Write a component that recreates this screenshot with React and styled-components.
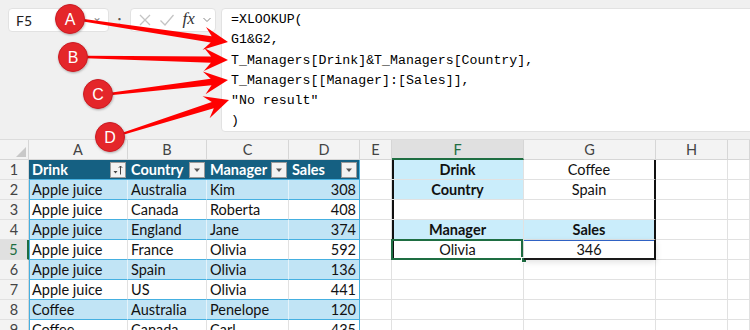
import React from 'react'
import styled, { createGlobalStyle } from 'styled-components'

const GlobalStyle = createGlobalStyle`
  html, body {
    margin: 0;
    padding: 0;
    background: #f0f0f0;
  }
  * { box-sizing: border-box; }
`

const cellFont = `"Lato", "Noto Sans", sans-serif`

const tableRows = [
    ['Apple juice', 'Australia', 'Kim', 308],
    ['Apple juice', 'Canada', 'Roberta', 408],
    ['Apple juice', 'England', 'Jane', 374],
    ['Apple juice', 'France', 'Olivia', 592],
    ['Apple juice', 'Spain', 'Olivia', 136],
    ['Apple juice', 'US', 'Olivia', 441],
    ['Coffee', 'Australia', 'Penelope', 120],
    ['Coffee', 'Canada', 'Carl', 435],
]

const lookup = {
    1: [{ text: 'Drink', head: true }, { text: 'Coffee' }],
    2: [{ text: 'Country', head: true }, { text: 'Spain' }],
    3: [{ text: '' }, { text: '' }],
    4: [{ text: 'Manager', head: true }, { text: 'Sales', head: true }],
    5: [{ text: 'Olivia' }, { text: '346' }],
}

const formula = [
    '=XLOOKUP(',
    'G1&G2,',
    'T_Managers[Drink]&T_Managers[Country],',
    'T_Managers[[Manager]:[Sales]],',
    '"No result"',
    ')',
]

const callouts = [
    { id: 'A', cx: 70, cy: 19, sx: 82, sy: 20, tx: 228, ty: 42 },
    { id: 'B', cx: 73, cy: 57, sx: 86, sy: 57, tx: 228, ty: 60 },
    { id: 'C', cx: 98, cy: 94, sx: 110, sy: 94, tx: 228, ty: 80 },
    { id: 'D', cx: 110, cy: 137, sx: 122, sy: 134, tx: 229, ty: 100 },
]

// tapered arrow: thin at the callout, wide notched head at the formula line
function arrowPoints({ sx, sy, tx, ty }) {
    const dx = tx - sx
    const dy = ty - sy
    const len = Math.hypot(dx, dy)
    const ux = dx / len
    const uy = dy / len
    const px = -uy
    const py = ux
    const p = (a, b) => `${(tx - a * ux + b * px).toFixed(1)},${(ty - a * uy + b * py).toFixed(1)}`
    return [
        p(0, 0),
        p(24, 11.5),
        p(17, 3.2),
        p(len, 1.2),
        p(len, -1.2),
        p(17, -3.2),
        p(24, -11.5),
    ].join(' ')
}

function Callouts() {
    return (
        <Overlay width="750" height="330" viewBox="0 0 750 330">
            <defs>
                <filter id="dot-shadow" x="-50%" y="-50%" width="200%" height="200%">
                    <feDropShadow dx="0.5" dy="1" stdDeviation="1.2" floodColor="#000" floodOpacity="0.3" />
                </filter>
            </defs>
            {callouts.map((c) => (
                <polygon key={c.id + 'a'} points={arrowPoints(c)} fill="#ff0000" />
            ))}
            {callouts.map((c) => (
                <g key={c.id}>
                    <circle cx={c.cx} cy={c.cy} r="14.5" fill="#e4252c" stroke="#c91c22" strokeWidth="1" filter="url(#dot-shadow)" />
                    <text x={c.cx} y={c.cy + 5.5} textAnchor="middle" fill="#fff" fontSize="16" fontFamily='"Liberation Sans", Arial, sans-serif'>{c.id}</text>
                </g>
            ))}
        </Overlay>
    )
}

function SortIcon() {
    return (
        <svg width="12" height="12" viewBox="0 0 12 12">
            <path d="M1.5 7 L5.5 7 L3.5 9.5 Z" fill="#444" />
            <path d="M8.5 2 L8.5 10.5 M6.8 3.8 L8.5 2 L10.2 3.8" stroke="#444" strokeWidth="1" fill="none" />
        </svg>
    )
}

function DropIcon() {
    return (
        <svg width="10" height="10" viewBox="0 0 10 10">
            <path d="M2 3.5 L8 3.5 L5 7 Z" fill="#555" />
        </svg>
    )
}

function FilterButton({ sort }) {
    return <Filter>{sort ? <SortIcon /> : <DropIcon />}</Filter>
}

function App() {
    const letters = ['A', 'B', 'C', 'D', 'E', 'F', 'G', 'H', '']

    const renderRow = (r) => {
        const cells = []
        cells.push(<RowNum key={'n' + r} $active={r === 5}>{r}</RowNum>)

        // table A:D
        if (r === 1) {
            ;['Drink', 'Country', 'Manager', 'Sales'].forEach((h, i) => {
                cells.push(
                    <TableHead key={'h' + i} $first={i === 0} $last={i === 3}>
                        <span>{h}</span>
                        <FilterButton sort={i === 0} />
                    </TableHead>
                )
            })
        } else {
            const row = tableRows[r - 2]
            row.forEach((v, i) => {
                cells.push(
                    <TableCell key={'t' + i} $band={r % 2 === 0} $first={i === 0} $last={i === 3} $num={i === 3}>
                        {v}
                    </TableCell>
                )
            })
        }

        cells.push(<Cell key="e" />)

        // lookup F:G
        if (lookup[r]) {
            const [f, g] = lookup[r]
            cells.push(
                <LookupCell key="f" $head={f.head} $left={true} $selected={r === 5}>
                    {f.text}
                    {r === 5 && <FillHandle />}
                </LookupCell>
            )
            cells.push(
                <LookupCell key="g" $head={g.head} $right={true} $spill={r === 5}>
                    {g.text}
                </LookupCell>
            )
        } else {
            cells.push(<Cell key="f" />)
            cells.push(<Cell key="g" />)
        }

        cells.push(<Cell key="h" />)
        cells.push(<Cell key="i" />)
        return cells
    }

    return (
        <>
            <GlobalStyle />
            <Page>
                <FormulaBar>
                    <NameBox>
                        <span>F5</span>
                        <Chevron>⌄</Chevron>
                    </NameBox>
                    <Grip>:</Grip>
                    <FxBox>
                        <svg width="14" height="14" viewBox="0 0 14 14">
                            <path d="M2 2 L12 12 M12 2 L2 12" stroke="#c4c4c4" strokeWidth="1.3" />
                        </svg>
                        <svg width="16" height="14" viewBox="0 0 16 14">
                            <path d="M1.5 7.5 L6 12 L14.5 2" stroke="#c4c4c4" strokeWidth="1.3" fill="none" />
                        </svg>
                        <Fx>fx</Fx>
                        <svg width="10" height="10" viewBox="0 0 10 10">
                            <path d="M1.5 3 L5 6.5 L8.5 3" stroke="#888" strokeWidth="1" fill="none" />
                        </svg>
                    </FxBox>
                    <FormulaBox>
                        {formula.map((line, i) => (
                            <FormulaLine key={i}>{line}</FormulaLine>
                        ))}
                    </FormulaBox>
                </FormulaBar>

                <Sheet>
                    <Corner>
                        <svg width="10" height="10" viewBox="0 0 10 10">
                            <path d="M10 0 L10 10 L0 10 Z" fill="#c8c8c8" />
                        </svg>
                    </Corner>
                    {letters.map((l, i) => (
                        <ColHead key={i} $active={l === 'F'}>{l}</ColHead>
                    ))}
                    {[1, 2, 3, 4, 5, 6, 7, 8, 9].map((r) => renderRow(r))}
                </Sheet>

                <Callouts />
            </Page>
        </>
    )
}

export default App

const Page = styled.div`
    position: relative;
    width: 750px;
    height: 330px;
    overflow: hidden;
    background: #f0f0f0;
    font-family: ${cellFont};
`

const Overlay = styled.svg`
    position: absolute;
    left: 0;
    top: 0;
    pointer-events: none;
`

const FormulaBar = styled.div`
    height: 139px;
    display: flex;
    align-items: flex-start;
    padding: 8px 0 0 8px;
`

const NameBox = styled.div`
    width: 101px;
    height: 24px;
    background: #fff;
    border: 1px solid #e2e2e2;
    border-radius: 4px;
    display: flex;
    align-items: center;
    justify-content: space-between;
    padding: 0 6px 0 7px;
    font-size: 14px;
    color: #222;
`

const Chevron = styled.span`
    color: #888;
    font-size: 12px;
    line-height: 1;
    margin-top: -6px;
`

const Grip = styled.div`
    width: 21px;
    height: 24px;
    display: flex;
    align-items: center;
    justify-content: center;
    font-weight: bold;
    font-size: 15px;
    color: #555;
`

const FxBox = styled.div`
    width: 86px;
    height: 24px;
    background: #fff;
    border: 1px solid #e2e2e2;
    border-radius: 4px;
    display: flex;
    align-items: center;
    justify-content: space-between;
    padding: 0 3px 0 7px;
`

const Fx = styled.span`
    font-family: "Liberation Serif", "DejaVu Serif", serif;
    font-style: italic;
    font-size: 17px;
    color: #333;
    margin-top: -3px;
`

const FormulaBox = styled.div`
    flex: 1;
    margin-left: 5px;
    margin-right: -12px;
    height: 124px;
    background: #fff;
    border: 1px solid #e2e2e2;
    border-radius: 4px;
    padding: 1px 0 0 9px;
`

const FormulaLine = styled.div`
    height: 20.3px;
    line-height: 20.3px;
    font-family: "Liberation Mono", "DejaVu Sans Mono", monospace;
    font-size: 13.25px;
    color: #000;
    white-space: pre;
`

const Sheet = styled.div`
    display: grid;
    grid-template-columns: 29px 99px 79px 82px 71px 32px 132px 132px 72px 1fr;
    grid-auto-rows: 20px;
    background: #fff;
    border-top: 1px solid #dcdcdc;
`

const Corner = styled.div`
    background: #f3f3f3;
    border-right: 1px solid #d6d6d6;
    border-bottom: 1px solid #d6d6d6;
    display: flex;
    align-items: flex-end;
    justify-content: flex-end;
    padding: 0 2px 2px 0;
`

const ColHead = styled.div`
    background: ${(p) => (p.$active ? '#e0e0e0' : '#f3f3f3')};
    color: ${(p) => (p.$active ? '#1e6e42' : '#444')};
    border-right: 1px solid #d6d6d6;
    border-bottom: ${(p) => (p.$active ? '2px solid #1e6e42' : '1px solid #d6d6d6')};
    display: flex;
    align-items: center;
    justify-content: center;
    font-size: 14.5px;
`

const RowNum = styled.div`
    background: ${(p) => (p.$active ? '#e0e0e0' : '#f3f3f3')};
    color: ${(p) => (p.$active ? '#1e6e42' : '#444')};
    border-right: ${(p) => (p.$active ? '2px solid #1e6e42' : '1px solid #d6d6d6')};
    border-bottom: 1px solid #e1e1e1;
    display: flex;
    align-items: center;
    justify-content: center;
    font-size: 14.5px;
`

const Cell = styled.div`
    background: #fff;
    border-right: 1px solid #e1e1e1;
    border-bottom: 1px solid #e1e1e1;
`

const TableHead = styled.div`
    background: #156082;
    color: #fff;
    font-weight: bold;
    font-size: 14.5px;
    display: flex;
    align-items: center;
    justify-content: space-between;
    padding: 0 2px 0 3px;
    border-bottom: 1px solid #45b0e1;
    border-right: ${(p) => (p.$last ? '1px solid #45b0e1' : 'none')};
    overflow: hidden;
    white-space: nowrap;
`

const Filter = styled.div`
    flex: none;
    width: 16px;
    height: 16px;
    background: #f2f2f2;
    border: 1px solid #9a9a9a;
    display: flex;
    align-items: center;
    justify-content: center;
`

const TableCell = styled.div`
    background: ${(p) => (p.$band ? '#c1e4f5' : '#fff')};
    color: #111;
    font-size: 14.5px;
    display: flex;
    align-items: center;
    justify-content: ${(p) => (p.$num ? 'flex-end' : 'flex-start')};
    padding: 0 3px;
    border-bottom: 1px solid #45b0e1;
    border-right: 1px solid ${(p) => (p.$last ? '#45b0e1' : p.$band ? '#e4f3fb' : '#e1e1e1')};
    box-shadow: ${(p) => (p.$first ? 'inset 1px 0 0 #45b0e1' : 'none')};
    white-space: nowrap;
    overflow: hidden;
`

const LookupCell = styled.div`
    position: relative;
    z-index: ${(p) => (p.$selected || p.$spill ? 2 : 1)};
    background: ${(p) => (p.$head ? '#caedfb' : '#fff')};
    color: #111;
    font-size: 14.5px;
    font-weight: ${(p) => (p.$head ? 'bold' : 'normal')};
    display: flex;
    align-items: center;
    justify-content: center;
    border-bottom: ${(p) => (p.$spill ? '2px solid #1a1a1a' : '1px solid #e1e1e1')};
    border-right: ${(p) => (p.$right ? '2px solid #111' : '1px solid #e1e1e1')};
    box-shadow: ${(p) =>
        p.$left ? 'inset 2px 0 0 #111' : p.$spill ? 'inset 0 1px 0 #2f62c4, 0 2px 6px rgba(0,0,0,0.12)' : 'none'};

    ${(p) =>
        p.$selected &&
        `
        &::after {
            content: '';
            position: absolute;
            left: -1px;
            top: -1px;
            right: 0;
            bottom: -1px;
            border: 2px solid #1e6e42;
            pointer-events: none;
        }
    `}
`

const FillHandle = styled.span`
    position: absolute;
    right: -4px;
    bottom: -4px;
    width: 6px;
    height: 6px;
    background: #1e6e42;
    border: 1px solid #fff;
    z-index: 3;
`
